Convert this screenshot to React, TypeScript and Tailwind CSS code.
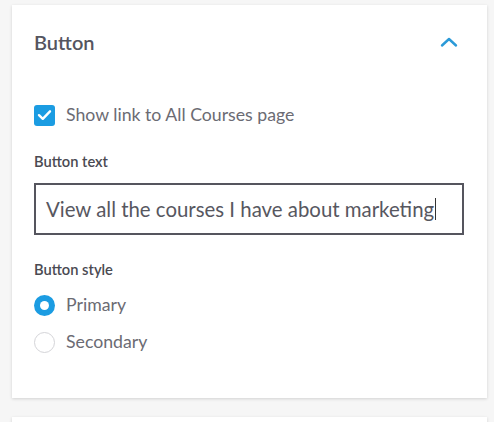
import type { FC } from 'react';

const ChevronUp: FC = () => (
    <svg width="18" height="12" viewBox="0 0 18 12" fill="none">
        <path d="M2 9.5 L9 3 L16 9.5" stroke="#2b9ad8" strokeWidth="2.4" strokeLinecap="round" strokeLinejoin="round" />
    </svg>
);

const Checkbox: FC = () => (
    <span className="flex h-[21px] w-[21px] items-center justify-center rounded-[3px] bg-[#1b9ce2]">
        <svg width="15" height="12" viewBox="0 0 15 12" fill="none">
            <path d="M2 6.2 L5.8 9.8 L13 2.3" stroke="#ffffff" strokeWidth="2.4" strokeLinecap="round" strokeLinejoin="round" />
        </svg>
    </span>
);

const Radio: FC<{ checked?: boolean }> = ({ checked }) =>
    checked ? (
        <span className="flex h-[21px] w-[21px] items-center justify-center rounded-full bg-[#1b9ce2]">
            <span className="h-[9px] w-[9px] rounded-full bg-white" />
        </span>
    ) : (
        <span className="h-[21px] w-[21px] rounded-full border border-[#d4d4d8] bg-white" />
    );

const App: FC = () => {
    const font = { fontFamily: '"Source Sans Pro", Lato, "Noto Sans", sans-serif' };

    return (
        <div className="min-h-[422px] w-[494px] overflow-hidden bg-[#f6f6f6] pt-[5px]" style={font}>
            <div className="ml-[12px] w-[475px] bg-white px-[22px] pt-[24px] pb-[45px] shadow-[0_1px_3px_rgba(0,0,0,0.15)]">
                <div className="flex items-center justify-between pr-[7px]">
                    <h2 className="text-[20px] font-semibold leading-[26px] text-[#55555f]">Button</h2>
                    <ChevronUp />
                </div>

                <label className="mt-[49px] flex items-center gap-[11px]">
                    <Checkbox />
                    <span className="text-[17.7px] leading-[22px] text-[#6b6b73]">Show link to All Courses page</span>
                </label>

                <div className="mt-[26px] text-[14.7px] font-semibold leading-[18px] text-[#4a4a52]">Button text</div>
                <div className="mt-[13px] flex h-[52px] w-[430px] items-center border-2 border-[#55555e] px-[10px]">
                    <span className="text-[20.4px] leading-[24px] text-[#57575f]">
                        View all the courses I have about marketing
                    </span>
                    <span className="ml-[1px] h-[22px] w-px bg-[#333]" />
                </div>

                <div className="mt-[25px] text-[14.7px] font-semibold leading-[18px] text-[#4a4a52]">Button style</div>
                <div className="mt-[16px] flex flex-col gap-[15px]">
                    <label className="flex items-center gap-[11px]">
                        <Radio checked />
                        <span className="text-[17.7px] leading-[22px] text-[#6b6b73]">Primary</span>
                    </label>
                    <label className="flex items-center gap-[11px]">
                        <Radio />
                        <span className="text-[17.7px] leading-[22px] text-[#6b6b73]">Secondary</span>
                    </label>
                </div>
            </div>
            <div className="ml-[12px] mt-[19px] h-[20px] w-[475px] bg-white shadow-[0_1px_3px_rgba(0,0,0,0.15)]" />
        </div>
    );
};

export default App;
